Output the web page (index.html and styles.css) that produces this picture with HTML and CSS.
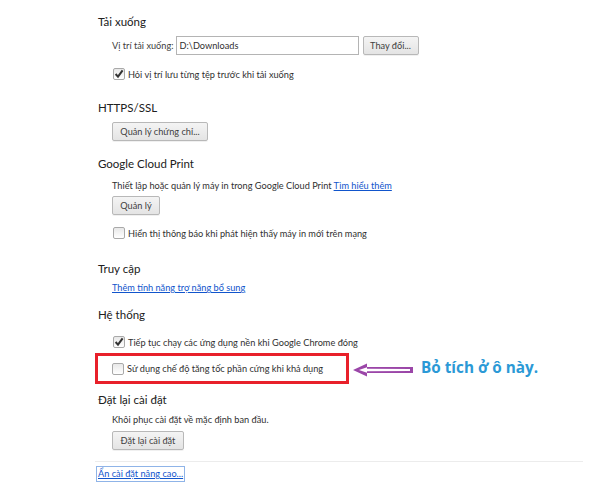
FILE: index.html
```html
<!DOCTYPE html>
<html lang="vi">
<head>
<meta charset="utf-8">
<link rel="stylesheet" href="styles.css">
</head>
<body>
<div class="page">
  <section class="sec s-download">
    <h3 class="title">Tải xuống</h3>
    <div class="indent">
      <div class="row loc-row">
        <span class="lbl">Vị trí tải xuống:</span>
        <span class="input">D:\Downloads</span>
        <span class="btn btn-change">Thay đổi...</span>
      </div>
      <div class="row cb-row mt10">
        <span class="cb checked"><svg viewBox="0 0 12 12" width="12" height="12"><path d="M2.6 6 L5 8.6 L9.6 2.4" fill="none" stroke="#333" stroke-width="2"/></svg></span>
        <span class="cb-text">Hỏi vị trí lưu từng tệp trước khi tải xuống</span>
      </div>
    </div>
  </section>

  <section class="sec s-https">
    <h3 class="title">HTTPS/SSL</h3>
    <div class="indent">
      <span class="btn btn-cert">Quản lý chứng chỉ...</span>
    </div>
  </section>

  <section class="sec s-gcp">
    <h3 class="title">Google Cloud Print</h3>
    <div class="indent">
      <p class="text">Thiết lập hoặc quản lý máy in trong Google Cloud Print <a class="link">Tìm hiểu thêm</a></p>
      <span class="btn btn-manage">Quản lý</span>
      <div class="row cb-row mt9">
        <span class="cb"></span>
        <span class="cb-text">Hiển thị thông báo khi phát hiện thấy máy in mới trên mạng</span>
      </div>
    </div>
  </section>

  <section class="sec s-access">
    <h3 class="title">Truy cập</h3>
    <div class="indent">
      <p class="text"><a class="link">Thêm tính năng trợ năng bổ sung</a></p>
    </div>
  </section>

  <section class="sec s-system">
    <h3 class="title">Hệ thống</h3>
    <div class="indent">
      <div class="row cb-row mt8">
        <span class="cb checked"><svg viewBox="0 0 12 12" width="12" height="12"><path d="M2.6 6 L5 8.6 L9.6 2.4" fill="none" stroke="#333" stroke-width="2"/></svg></span>
        <span class="cb-text">Tiếp tục chạy các ứng dụng nền khi Google Chrome đóng</span>
      </div>
    </div>
    <div class="annot">
      <div class="redbox">
        <div class="row cb-row">
          <span class="cb"></span>
          <span class="cb-text">Sử dụng chế độ tăng tốc phần cứng khi khả dụng</span>
        </div>
      </div>
      <svg class="arrow" viewBox="0 0 62 16" width="62" height="16">
        <path d="M1 8 L15 1.5 L15 5 L61 5 L61 11 L15 11 L15 14.5 Z" fill="#9b46a8"/>
        <path d="M7 8 L15 5.2 L15 6.8 L58 7 L58 9 L15 9.2 L15 10.8 Z" fill="#ffffff"/>
      </svg>
      <span class="note">Bỏ tích ở ô này.</span>
    </div>
  </section>

  <section class="sec s-reset">
    <h3 class="title">Đặt lại cài đặt</h3>
    <div class="indent">
      <p class="text">Khôi phục cài đặt về mặc định ban đầu.</p>
      <span class="btn btn-reset">Đặt lại cài đặt</span>
    </div>
  </section>

  <div class="divider"></div>
  <a class="link hide-link">Ẩn cài đặt nâng cao...</a>
</div>
</body>
</html>
```

FILE: styles.css
```css
* { box-sizing: border-box; }
html, body {
  margin: 0;
  padding: 0;
  background: #ffffff;
}
body {
  font-family: Lato, "Open Sans", "Noto Sans", sans-serif;
  font-size: 9.2px;
  color: #303030;
  width: 600px;
  height: 493px;
  overflow: hidden;
}
.page {
  padding: 12px 0 0 98px;
}
.title {
  margin: 0;
  font-weight: normal;
  font-size: 11.5px;
  line-height: 20px;
  height: 20px;
  color: #202020;
}
.indent {
  padding-left: 14px;
}
.row {
  display: flex;
  align-items: center;
}
.loc-row {
  margin-top: 4px;
  height: 19px;
}
.lbl {
  color: #404040;
  margin-right: 2px;
  white-space: nowrap;
}
.input {
  display: flex;
  align-items: center;
  width: 183px;
  height: 19px;
  border: 1px solid #b4b4b4;
  padding-left: 3px;
  color: #303030;
  background: #fff;
}
.btn {
  display: inline-flex;
  align-items: center;
  justify-content: center;
  height: 19px;
  border: 1px solid #b8b8b8;
  border-radius: 2px;
  background: linear-gradient(#f4f4f4, #e4e4e4);
  color: #404040;
  box-shadow: 0 1px 0 rgba(0,0,0,0.06);
  white-space: nowrap;
}
.btn-change {
  width: 56px;
  margin-left: 4px;
}
.cb-row {
  height: 18px;
}
.mt10 { margin-top: 10px; }
.mt9 { margin-top: 9px; }
.mt8 { margin-top: 8px; }
.cb {
  width: 12px;
  height: 12px;
  border: 1px solid #a9a9a9;
  border-radius: 2px;
  background: linear-gradient(#e8e8e8, #ffffff);
  margin-left: 1px;
  margin-right: 3px;
  position: relative;
  flex: none;
}
.cb svg {
  position: absolute;
  left: -1px;
  top: -1px;
}
.cb-text {
  color: #303030;
  white-space: nowrap;
}
.s-https { margin-top: 15px; }
.s-https .btn-cert {
  margin-top: 4px;
  width: 96px;
}
.s-gcp { margin-top: 13px; }
.text {
  margin: 0;
  line-height: 18px;
  height: 18px;
  padding-top: 3px;
  box-sizing: content-box;
  white-space: nowrap;
}
.btn-manage {
  margin-top: 1px;
  width: 48px;
}
.link {
  color: #1155cc;
  text-decoration: underline;
}
.s-access { margin-top: 17px; }
.s-access .text { padding-top: 0; }
.s-system { margin-top: 8px; }
.annot {
  display: flex;
  align-items: center;
  margin-left: -3px;
  margin-top: 2px;
}
.redbox {
  width: 254px;
  height: 31px;
  border: 3px solid #e8202a;
  padding-left: 13px;
  display: flex;
  align-items: center;
}
.arrow {
  margin-left: 3px;
  margin-top: 2px;
}
.note {
  margin-left: 7px;
  margin-top: -3px;
  font-family: "Open Sans", "Noto Sans", sans-serif;
  font-weight: bold;
  font-size: 15.3px;
  color: #2b99d6;
  white-space: nowrap;
}
.s-reset { margin-top: 6px; }
.s-reset .text { padding-top: 1px; }
.btn-reset {
  margin-top: 2px;
  width: 72px;
}
.divider {
  margin-top: 11px;
  height: 1px;
  width: 488px;
  margin-left: -3px;
  background: #ececec;
}
.hide-link {
  display: inline-block;
  margin-top: 5px;
  margin-left: -1px;
  outline: 1px solid #8fb4e8;
  line-height: 14px;
  padding: 0 1px;
}
```
